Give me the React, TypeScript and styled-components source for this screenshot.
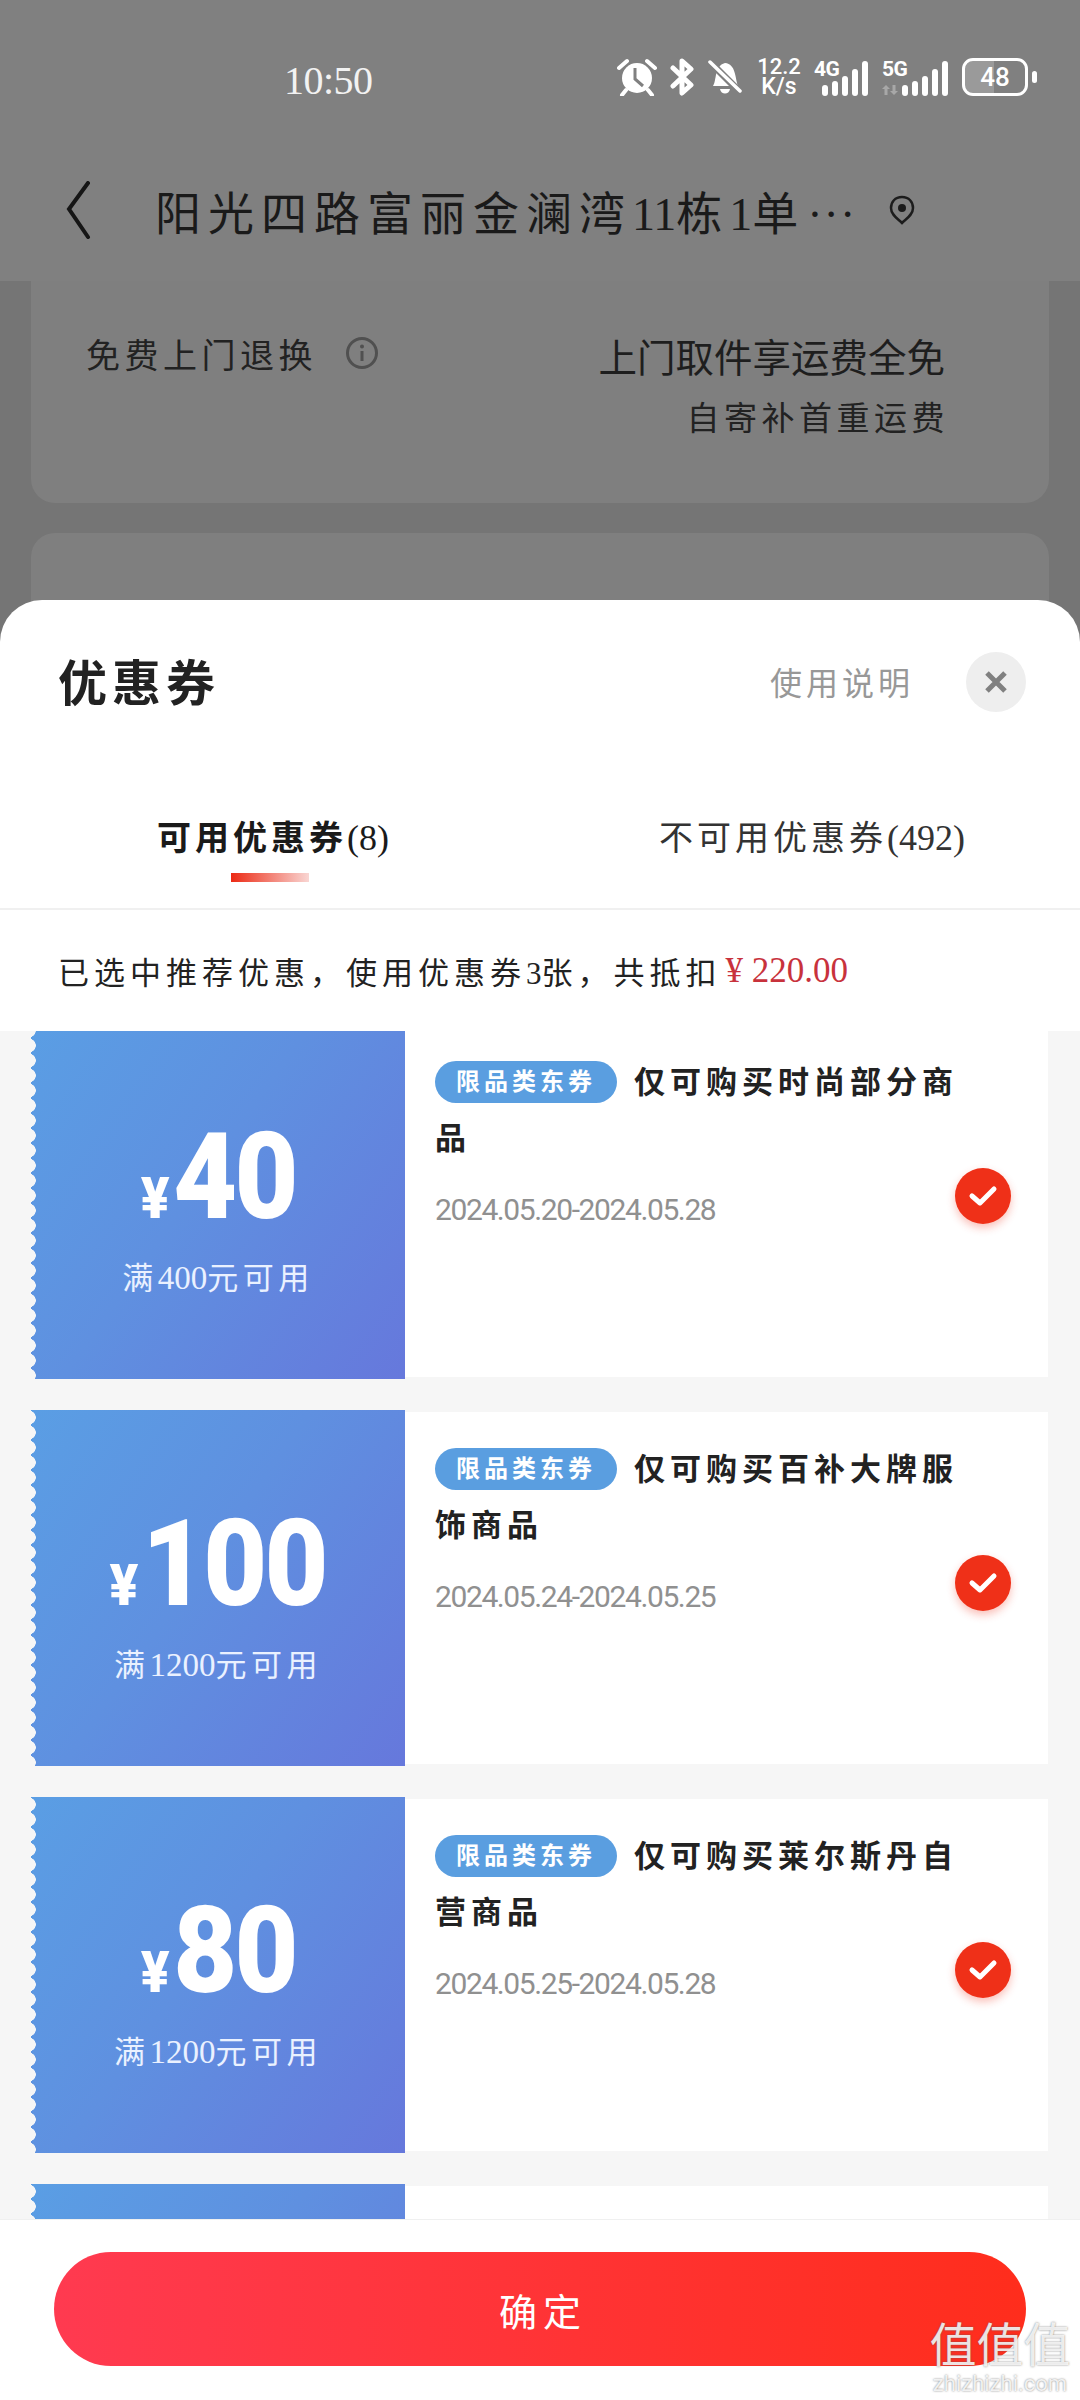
import React from "react";
import styled, { createGlobalStyle } from "styled-components";

const SERIF = `"Liberation Serif", "Noto Sans CJK SC", serif`;
const SANS = `"Noto Sans CJK SC", "Noto Sans", sans-serif`;
const NUM = `Roboto, "Noto Sans", sans-serif`;

const coupons = [
  { amount: "40", limit: "400", title: "仅可购买时尚部分商品", date: "2024.05.20-2024.05.28" },
  { amount: "100", limit: "1200", title: "仅可购买百补大牌服饰商品", date: "2024.05.24-2024.05.25" },
  { amount: "80", limit: "1200", title: "仅可购买莱尔斯丹自营商品", date: "2024.05.25-2024.05.28" },
];

const Signal = ({ label, arrows }: { label: string; arrows?: boolean }) => (
  <SignalWrap $arrows={arrows}>
    <SignalLabel>{label}</SignalLabel>
    {arrows && (
      <svg width="16" height="10" viewBox="0 0 16 10">
        <path d="M4 0 L8 4 H5.5 V10 H2.5 V4 H0 Z M12 10 L8 6 H10.5 V0 H13.5 V6 H16 Z" fill="#a8a8a8" />
      </svg>
    )}
    <Bars>
      {[11, 15, 20, 27, 35].map((h) => (
        <Bar key={h} $h={h} />
      ))}
    </Bars>
  </SignalWrap>
);

const Coupon = ({ amount, limit, title, date }: (typeof coupons)[number]) => (
  <CouponRow>
    <CouponLeft>
      <Amount>
        <Yen>¥</Yen>
        <span>{amount}</span>
      </Amount>
      <Limit>
        满<Num>{limit}</Num>元可用
      </Limit>
    </CouponLeft>
    <CouponRight>
      <CouponTitle>
        <Tag>限品类东券</Tag>
        <span>{title}</span>
      </CouponTitle>
      <DateText>{date}</DateText>
      <CheckBadge>
        <svg width="30" height="24" viewBox="0 0 30 24">
          <path d="M4 12 L12 19 L26 5" fill="none" stroke="#fff" strokeWidth="5" strokeLinecap="round" strokeLinejoin="round" />
        </svg>
      </CheckBadge>
    </CouponRight>
  </CouponRow>
);

export default function App() {
  return (
    <Page>
      <GlobalStyle />
      <BackLayer>
        <TopBar>
          <StatusBar>
            <Time>10:50</Time>
            <StatusIcons>
              <svg width="40" height="38" viewBox="0 0 40 38">
                <circle cx="20" cy="20" r="15" fill="#fff" />
                <path d="M18 10 V21 L26 28" fill="none" stroke="#808080" strokeWidth="3" />
                <path d="M2 10 L10 3 M38 10 L30 3" stroke="#fff" strokeWidth="4" strokeLinecap="round" />
                <path d="M9 32 L5 37 M31 32 L35 37" stroke="#fff" strokeWidth="4" strokeLinecap="round" />
              </svg>
              <svg width="25" height="38" viewBox="0 0 25 38">
                <path d="M3 10 L21 27 L12 35 V3 L21 11 L3 28" fill="none" stroke="#fff" strokeWidth="5" strokeLinejoin="round" strokeLinecap="round" />
              </svg>
              <svg width="34" height="38" viewBox="0 0 34 38">
                <path d="M5 28 C9 22 6 8 17 5 C28 6 27 20 30 28 Z" fill="#fff" />
                <path d="M12 31 H22 C21 37 13 37 12 31 Z" fill="#fff" />
                <path d="M1 3 L33 35" stroke="#808080" strokeWidth="7" />
                <path d="M2 4 L32 33" stroke="#fff" strokeWidth="3.5" strokeLinecap="round" />
              </svg>
              <Speed>
                <span>12.2</span>
                <span>K/s</span>
              </Speed>
              <Signal label="4G" />
              <Signal label="5G" arrows />
              <Battery>48</Battery>
            </StatusIcons>
          </StatusBar>
          <NavBar>
            <svg width="26" height="58" viewBox="0 0 26 58">
              <path d="M23 2 L4 28 L23 56" fill="none" stroke="#161616" strokeWidth="4" strokeLinecap="round" />
            </svg>
            <NavTitle>
              阳光四路富丽金澜湾<Num>11</Num>栋<Num>1</Num>单<Dots>···</Dots>
            </NavTitle>
            <svg width="28" height="30" viewBox="0 0 28 30">
              <path d="M14 2 C7 2 3 7 3 13 C3 20 10 24 14 28 C18 24 25 20 25 13 C25 7 21 2 14 2 Z" fill="none" stroke="#1c1c1c" strokeWidth="2.5" />
              <circle cx="14" cy="13" r="4" fill="#1c1c1c" />
            </svg>
          </NavBar>
        </TopBar>
        <ReturnCard>
          <ReturnLabel>
            <LabelText>免费上门退换</LabelText>
            <svg width="34" height="34" viewBox="0 0 34 34">
              <circle cx="17" cy="17" r="14.5" fill="none" stroke="#505050" strokeWidth="3" />
              <circle cx="17" cy="10.5" r="2" fill="#505050" />
              <path d="M17 15 V25" stroke="#505050" strokeWidth="3" />
            </svg>
          </ReturnLabel>
          <ReturnInfo>
            <ReturnMain>上门取件享运费全免</ReturnMain>
            <ReturnSub>自寄补首重运费</ReturnSub>
          </ReturnInfo>
        </ReturnCard>
        <EmptyCard />
      </BackLayer>

      <Sheet>
        <SheetHead>
          <SheetTitle>优惠券</SheetTitle>
          <HelpLink>使用说明</HelpLink>
          <CloseButton>
            <svg width="24" height="24" viewBox="0 0 24 24">
              <path d="M3 3 L21 21 M21 3 L3 21" stroke="#808080" strokeWidth="5" />
            </svg>
          </CloseButton>
        </SheetHead>
        <Tabs>
          <Tab $active $left={157}>
            可用优惠券<TabNum>(8)</TabNum>
            <TabMark />
          </Tab>
          <Tab $left={270}>
            不可用优惠券<TabNum>(492)</TabNum>
          </Tab>
        </Tabs>
        <Notice>
          <span>
            已选中推荐优惠，使用优惠券<Num>3</Num>张，共抵扣
          </span>
          <Price>¥ 220.00</Price>
        </Notice>
        <List>
          <ListInner>
            {coupons.map((c) => (
              <Coupon key={c.amount} {...c} />
            ))}
            <CouponRow>
              <CouponLeft />
              <CouponRight />
            </CouponRow>
          </ListInner>
        </List>
        <Footer>
          <ConfirmButton>确定</ConfirmButton>
          <Watermark>
            <WatermarkMark>值值值</WatermarkMark>
            <WatermarkUrl>zhizhizhi.com</WatermarkUrl>
          </Watermark>
        </Footer>
      </Sheet>
    </Page>
  );
}

const GlobalStyle = createGlobalStyle`
  html, body {
    margin: 0;
    padding: 0;
    background: #757575;
  }
  * {
    box-sizing: border-box;
  }
`;

const Page = styled.div`
  width: 1080px;
  height: 2400px;
  display: flex;
  flex-direction: column;
  overflow: hidden;
  background: #757575;
  font-family: ${SERIF};
`;

const BackLayer = styled.div`
  height: 640px;
  flex-shrink: 0;
  overflow: hidden;
`;

const TopBar = styled.div`
  background: #808080;
  height: 281px;
`;

const StatusBar = styled.div`
  height: 160px;
  display: flex;
  align-items: center;
  padding: 0 41px 0 284px;
  color: #f2f2f2;
`;

const Time = styled.div`
  font-size: 40px;
  letter-spacing: -0.5px;
`;

const StatusIcons = styled.div`
  margin-left: auto;
  margin-top: -6px;
  display: flex;
  align-items: center;
  gap: 13px;
  color: #fff;
  font-family: ${NUM};
`;

const Speed = styled.div`
  width: 44px;
  margin: 0 0 0 2px;
  display: flex;
  flex-direction: column;
  align-items: center;
  font-size: 22px;
  font-weight: 500;
  line-height: 20px;

  span:last-child {
    font-size: 23px;
  }
`;

const SignalWrap = styled.div<{ $arrows?: boolean }>`
  position: relative;
  height: 38px;
  width: ${(p) => (p.$arrows ? 66 : 54)}px;
  display: flex;
  align-items: flex-end;
  justify-content: space-between;
  padding-left: ${(p) => (p.$arrows ? 0 : 8)}px;
  margin-right: 1px;

  svg {
    margin-bottom: 1px;
  }
`;

const SignalLabel = styled.span`
  position: absolute;
  left: 0;
  top: 1px;
  font-size: 21px;
  line-height: 20px;
  font-weight: 700;
  letter-spacing: -0.5px;
`;

const Bars = styled.div`
  display: flex;
  align-items: flex-end;
  gap: 4px;
`;

const Bar = styled.i<{ $h: number }>`
  display: block;
  width: 6px;
  height: ${(p) => p.$h}px;
  background: #fff;
  border-radius: 3px;
`;

const Battery = styled.div`
  position: relative;
  width: 66px;
  height: 38px;
  margin-right: 11px;
  border: 3px solid #fff;
  border-radius: 11px;
  background: linear-gradient(to right, #9a9a9a 48%, transparent 48%);
  display: flex;
  align-items: center;
  justify-content: center;
  font-size: 26px;
  font-weight: 500;

  &::after {
    content: "";
    position: absolute;
    right: -12px;
    top: 10px;
    width: 5px;
    height: 12px;
    border-radius: 3px;
    background: #fff;
  }
`;

const NavBar = styled.div`
  height: 100px;
  display: flex;
  align-items: center;
  padding-left: 65px;
  color: #1a1a1a;
`;

const NavTitle = styled.div`
  margin-left: 64px;
  width: 733px;
  font-size: 46px;
  letter-spacing: 7px;
  white-space: nowrap;
`;

const Dots = styled.span`
  letter-spacing: 1px;
  margin-left: 2px;
`;

const Num = styled.span`
  letter-spacing: 0;
`;

const ReturnCard = styled.div`
  height: 222px;
  margin: 0 31px;
  padding: 47px 104px 0 55px;
  background: #7f7f7f;
  border-radius: 0 0 24px 24px;
  display: flex;
  justify-content: space-between;
  color: #1e1e1e;
`;

const ReturnLabel = styled.div`
  display: flex;
  align-items: center;
  gap: 28px;
  height: 50px;
`;

const LabelText = styled.span`
  font-size: 34px;
  letter-spacing: 4.5px;
  color: #222;
`;

const ReturnInfo = styled.div`
  display: flex;
  flex-direction: column;
  align-items: flex-end;
`;

const ReturnMain = styled.div`
  font-family: ${SANS};
  font-size: 38.5px;
  line-height: 54px;
`;

const ReturnSub = styled.div`
  margin-top: 13px;
  font-size: 33px;
  line-height: 48px;
  letter-spacing: 4.5px;
  margin-right: -4px;
  color: #222;
`;

const EmptyCard = styled.div`
  height: 300px;
  margin: 30px 31px 0;
  background: #7f7f7f;
  border-radius: 24px;
`;

const Sheet = styled.div`
  position: relative;
  margin-top: -40px;
  flex: 1;
  min-height: 0;
  display: flex;
  flex-direction: column;
  background: #fff;
  border-radius: 42px 42px 0 0;
  overflow: hidden;
`;

const SheetHead = styled.div`
  height: 164px;
  display: flex;
  align-items: center;
  padding: 0 54px 0 58px;
`;

const SheetTitle = styled.div`
  margin-top: -5px;
  font-size: 49px;
  font-weight: 700;
  letter-spacing: 5px;
  color: #222;
`;

const HelpLink = styled.div`
  margin-left: auto;
  margin-top: -3px;
  font-size: 32px;
  letter-spacing: 4px;
  color: #989898;
`;

const CloseButton = styled.div`
  width: 60px;
  height: 60px;
  margin-left: 52px;
  border-radius: 50%;
  background: #eeeeee;
  display: flex;
  align-items: center;
  justify-content: center;
`;

const Tabs = styled.div`
  height: 146px;
  display: flex;
  align-items: flex-start;
  padding-top: 46px;
  border-bottom: 2px solid #f0f0f0;
`;

const Tab = styled.div<{ $active?: boolean; $left: number }>`
  position: relative;
  margin-left: ${(p) => p.$left}px;
  font-size: 34px;
  line-height: 56px;
  letter-spacing: 4px;
  white-space: nowrap;
  font-weight: ${(p) => (p.$active ? 700 : 400)};
  color: ${(p) => (p.$active ? "#1a1a1a" : "#333")};
`;

const TabNum = styled.span`
  font-size: 36px;
  font-weight: 400;
  letter-spacing: 0;
`;

const TabMark = styled.i`
  position: absolute;
  left: 74px;
  top: 63px;
  width: 78px;
  height: 9px;
  background: linear-gradient(to right, #ec2a14, #f9d6d3);
`;

const Notice = styled.div`
  height: 121px;
  padding: 0 0 0 58px;
  display: flex;
  align-items: center;
  white-space: pre;
  font-size: 31px;
  letter-spacing: 5px;
  color: #222;
`;

const Price = styled.span`
  margin-left: 4px;
  letter-spacing: 0;
  font-size: 35px;
  color: #c8323c;
`;

const List = styled.div`
  height: 1189px;
  flex-shrink: 0;
  overflow: hidden;
  background: #f6f6f6;
  border-bottom: 1px solid #f0f0f0;
`;

const ListInner = styled.div`
  margin-top: -8px;
  display: flex;
  flex-direction: column;
  gap: 31px;
`;

const CouponRow = styled.div`
  height: 356px;
  flex-shrink: 0;
  margin: 0 32px 0 31px;
  display: flex;
`;

const CouponLeft = styled.div`
  position: relative;
  width: 374px;
  flex-shrink: 0;
  display: flex;
  flex-direction: column;
  align-items: center;
  padding-top: 102px;
  background: linear-gradient(125deg, #5a9ee4 0%, #5f90e0 45%, #6678dc 100%);
  color: #fff;

  &::before {
    content: "";
    position: absolute;
    left: -1px;
    top: 0;
    bottom: 0;
    width: 6px;
    background: radial-gradient(circle at -1px 50%, #f6f6f6 6.5px, transparent 7px) 0 0 / 6px 15px repeat-y;
  }
`;

const Amount = styled.div`
  display: flex;
  align-items: baseline;
  height: 104px;
  font-family: ${NUM};
  font-size: 120px;
  line-height: 104px;
  font-weight: 900;
  letter-spacing: -3px;
  transform: scaleX(0.92);
`;

const Yen = styled.span`
  font-size: 58px;
  font-weight: 900;
  letter-spacing: 0;
  margin-right: 4px;
`;

const Limit = styled.div`
  margin-top: 27px;
  font-size: 31px;
  line-height: 44px;
  letter-spacing: 4.5px;
  color: #eaf1ff;

  ${Num} {
    font-size: 33px;
  }
`;

const CouponRight = styled.div`
  position: relative;
  flex: 1;
  margin: 2px 0;
  padding: 8px 0 0 30px;
  background: #fff;
`;

const CouponTitle = styled.div`
  width: 540px;
  min-height: 112px;
  margin-top: 22px;
  font-size: 31px;
  line-height: 56px;
  letter-spacing: 5px;
  font-weight: 700;
  color: #222;
`;

const Tag = styled.span`
  display: inline-block;
  width: 182px;
  height: 42px;
  margin-right: 17px;
  border-radius: 21px;
  background: #5a9ee0;
  color: #fff;
  font-size: 24px;
  line-height: 42px;
  font-weight: 700;
  letter-spacing: 4px;
  text-align: center;
  vertical-align: 3px;
`;

const DateText = styled.div`
  margin-top: 23px;
  font-family: ${NUM};
  font-size: 30px;
  line-height: 40px;
  letter-spacing: -1.4px;
  color: #909090;
`;

const CheckBadge = styled.div`
  position: absolute;
  right: 37px;
  top: 143px;
  width: 56px;
  height: 56px;
  border-radius: 50%;
  background: #ef3018;
  box-shadow: 0 4px 8px rgba(239, 48, 24, 0.3);
  display: flex;
  align-items: center;
  justify-content: center;
`;

const Footer = styled.div`
  position: relative;
  flex: 1;
  padding: 32px 54px 0;
  background: #fff;
`;

const ConfirmButton = styled.div`
  height: 114px;
  border-radius: 57px;
  background: linear-gradient(to right, #ff3a50, #ff2d1c);
  color: #fff;
  font-size: 38px;
  letter-spacing: 6px;
  padding-left: 6px;
  display: flex;
  align-items: center;
  justify-content: center;
`;

const Watermark = styled.div`
  position: absolute;
  right: 9px;
  bottom: 6px;
  width: 142px;
  display: flex;
  flex-direction: column;
  align-items: center;
  color: rgba(255, 255, 255, 0.85);
  text-shadow: 0 0 2px rgba(90, 90, 90, 0.8);
`;

const WatermarkMark = styled.div`
  font-family: ${SANS};
  font-size: 47px;
  line-height: 50px;
  white-space: nowrap;
`;

const WatermarkUrl = styled.div`
  margin-top: 7px;
  font-family: ${NUM};
  font-size: 22px;
  line-height: 20px;
  white-space: nowrap;
`;
